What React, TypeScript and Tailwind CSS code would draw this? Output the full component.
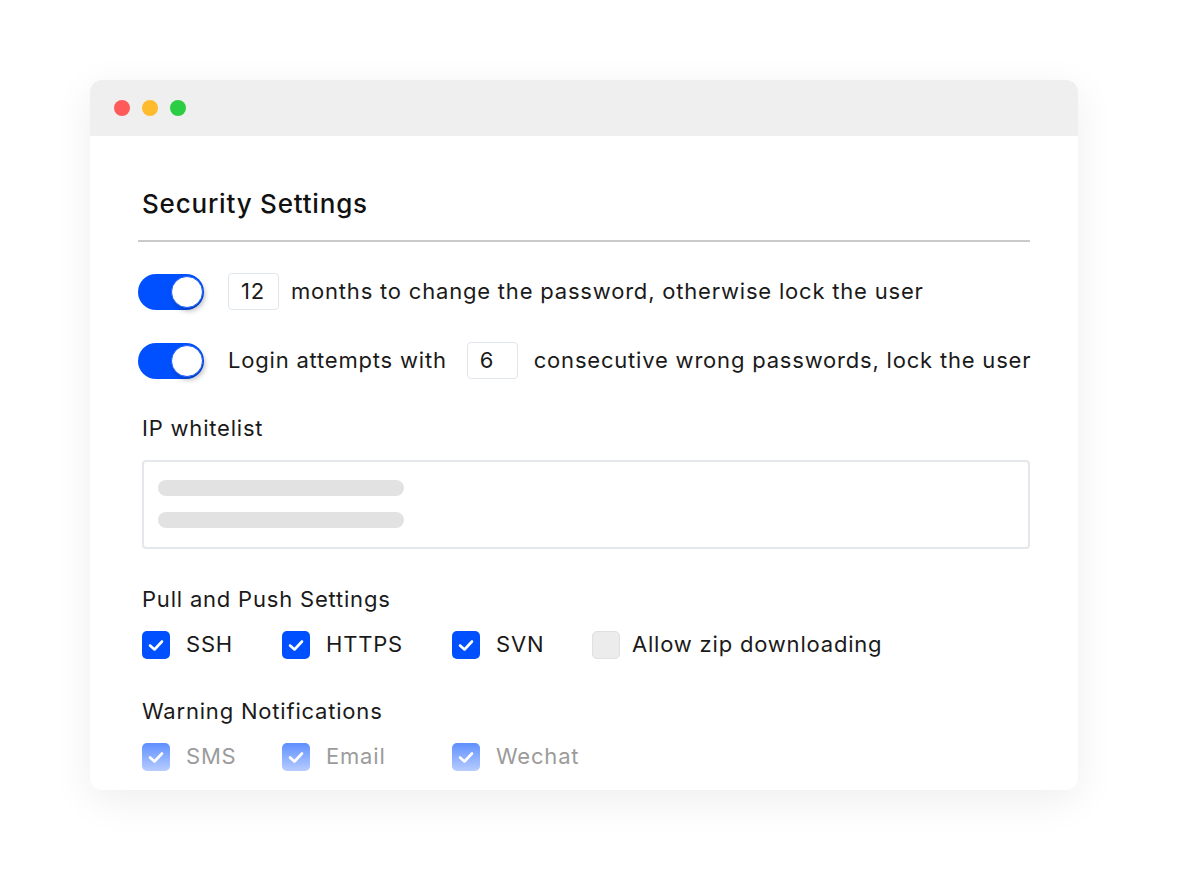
import React, { useState } from 'react';

const font = { fontFamily: 'Inter, "Noto Sans", Arial, sans-serif' };

const Toggle: React.FC<{ on: boolean; onChange: () => void }> = ({ on, onChange }) => (
  <button
    type="button"
    onClick={onChange}
    className={`relative w-[66px] h-[36px] rounded-full shrink-0 ${on ? 'bg-[#0050ff]' : 'bg-[#d9d9d9]'}`}
  >
    <span
      className={`absolute top-[2px] w-[32px] h-[32px] rounded-full bg-white border border-[#1a5cff] shadow-[2px_3px_5px_rgba(0,0,0,0.25)] ${on ? 'right-[1px]' : 'left-[1px]'}`}
    />
  </button>
);

const NumBox: React.FC<{ value: string }> = ({ value }) => (
  <span className="inline-flex items-center shrink-0 w-[51px] h-[37px] px-3 border border-[#e1e6ec] rounded-[4px] text-[22px] text-[#1a1a1a]">
    {value}
  </span>
);

const Check: React.FC<{
  checked: boolean;
  faded?: boolean;
  label: string;
  width: string;
  gap?: string;
  onChange?: () => void;
}> = ({ checked, faded, label, width, gap = 'gap-4', onChange }) => (
  <label className={`flex items-center ${gap} ${width}`} onClick={onChange}>
    <span
      className={`flex items-center justify-center w-[28px] h-[28px] rounded-[5px] shrink-0 ${
        faded
          ? 'bg-gradient-to-b from-[#5f8fff] to-[#b8ccff]'
          : checked
          ? 'bg-[#0050ff]'
          : 'bg-[#ececec] border border-[#e0e0e0]'
      }`}
    >
      {(checked || faded) && (
        <svg width="20" height="20" viewBox="0 0 20 20" fill="none">
          <path d="M4 10.5 L8.5 14.5 L16 6.5" stroke="white" strokeWidth="2.6" strokeLinecap="round" strokeLinejoin="round" />
        </svg>
      )}
    </span>
    <span className={`text-[22px] ${faded ? 'text-[#9b9b9b]' : 'text-[#1a1a1a]'}`}>{label}</span>
  </label>
);

export default function App() {
  const [expiry, setExpiry] = useState(true);
  const [attempts, setAttempts] = useState(true);
  const [proto, setProto] = useState({ ssh: true, https: true, svn: true, zip: false });

  return (
    <div className="w-[1200px] h-[880px] bg-white pt-[80px] pl-[90px] tracking-[0.8px]" style={font}>
      <div className="w-[988px] h-[710px] rounded-[12px] bg-white shadow-[0_10px_40px_rgba(0,0,0,0.07)] overflow-hidden">
        <div className="h-[56px] bg-[#efefef] flex items-center gap-3 pl-[24px]">
          <span className="w-4 h-4 rounded-full bg-[#ff5a5a]" />
          <span className="w-4 h-4 rounded-full bg-[#ffbb2e]" />
          <span className="w-4 h-4 rounded-full bg-[#2bcd45]" />
        </div>

        <div className="px-[48px] pt-[50px]">
          <h1 className="ml-1 text-[26px] leading-[36px] font-medium text-[#111]">Security Settings</h1>
          <div className="mt-[18px] h-[2px] bg-[#cacaca]" />

          <div className="mt-[31px] flex items-center gap-6 text-[22px] text-[#1a1a1a] whitespace-nowrap">
            <Toggle on={expiry} onChange={() => setExpiry(!expiry)} />
            <div className="flex items-center gap-3">
              <NumBox value="12" />
              <span>months to change the password, otherwise lock the user</span>
            </div>
          </div>

          <div className="mt-[32px] flex items-center gap-6 text-[22px] text-[#1a1a1a] whitespace-nowrap">
            <Toggle on={attempts} onChange={() => setAttempts(!attempts)} />
            <div className="flex items-center gap-4">
              <span className="mr-1">Login attempts with</span>
              <NumBox value="6" />
              <span>consecutive wrong passwords, lock the user</span>
            </div>
          </div>

          <div className="ml-1 mt-[34px] text-[22px] leading-[30px] text-[#1a1a1a]">IP whitelist</div>
          <div className="ml-1 mt-[17px] h-[89px] border-2 border-[#e4e7eb] rounded-[4px] px-[14px] pt-[18px] flex flex-col gap-4">
            <div className="w-[246px] h-[16px] rounded-full bg-[#e2e2e2]" />
            <div className="w-[246px] h-[16px] rounded-full bg-[#e2e2e2]" />
          </div>

          <div className="ml-1 mt-[35px] text-[22px] leading-[30px] text-[#1a1a1a]">Pull and Push Settings</div>
          <div className="ml-1 mt-[14px] flex items-center">
            <Check checked={proto.ssh} label="SSH" width="w-[140px]" onChange={() => setProto({ ...proto, ssh: !proto.ssh })} />
            <Check checked={proto.https} label="HTTPS" width="w-[170px]" onChange={() => setProto({ ...proto, https: !proto.https })} />
            <Check checked={proto.svn} label="SVN" width="w-[140px]" onChange={() => setProto({ ...proto, svn: !proto.svn })} />
            <Check
              checked={proto.zip}
              label="Allow zip downloading"
              width="w-[320px]"
              gap="gap-3"
              onChange={() => setProto({ ...proto, zip: !proto.zip })}
            />
          </div>

          <div className="ml-1 mt-[35px] text-[22px] leading-[30px] text-[#1a1a1a]">Warning Notifications</div>
          <div className="ml-1 mt-[14px] flex items-center">
            <Check checked faded label="SMS" width="w-[140px]" />
            <Check checked faded label="Email" width="w-[170px]" />
            <Check checked faded label="Wechat" width="w-[140px]" />
          </div>
        </div>
      </div>
    </div>
  );
}
